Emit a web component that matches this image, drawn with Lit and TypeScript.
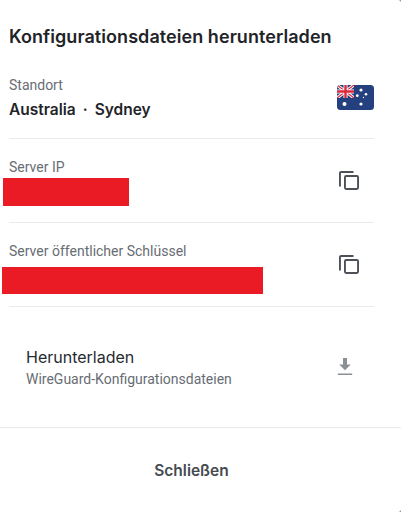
import { LitElement, html, css, svg } from "lit";
import { customElement } from "lit/decorators.js";

const copyIcon = html`<svg class="icon" width="20" height="19" viewBox="0 0 20 19" fill="none" stroke="#4b5157" stroke-width="1.9"><rect x="5.95" y="4.95" width="13.1" height="13.1" rx="1.2"/><path d="M14.5 .95H2.1A1.15 1.15 0 0 0 .95 2.1V15.5"/></svg>`;

const flag = html`<svg class="flag" width="37" height="25" viewBox="0 0 37 25">
  <defs><clipPath id="c"><rect width="37" height="25" rx="3.5"/></clipPath><clipPath id="q"><rect width="17" height="13"/></clipPath></defs>
  <g clip-path="url(#c)">
    <rect width="37" height="25" fill="#24407f"/>
    <g clip-path="url(#q)">
      <rect width="17" height="13" fill="#2a3f80"/>
      <path d="M0 0L17 13M17 0L0 13" stroke="#fff" stroke-width="3"/>
      <path d="M0 0L17 13M17 0L0 13" stroke="#d8283c" stroke-width="1.2"/>
      <path d="M8.5 0V13M0 6.5H17" stroke="#fff" stroke-width="4"/>
      <path d="M8.5 0V13M0 6.5H17" stroke="#d8283c" stroke-width="2.4"/>
    </g>
    ${svg`<g fill="#fff"><circle cx="7.5" cy="19" r="2"/><circle cx="24" cy="19" r="1.6"/><circle cx="24" cy="5" r="1.6"/><circle cx="20.3" cy="10.7" r="1.4"/><circle cx="29" cy="9.3" r="1.3"/><circle cx="26.5" cy="12.5" r=".7"/></g>`}
  </g>
</svg>`;

const downloadIcon = html`<svg class="icon" width="16" height="18" viewBox="0 0 16 18"><path fill="#8b9096" d="M6 0h4v6.5h3.8L8 12.2 2.2 6.5H6zM.8 15.4h14.4v1.6H.8z"/></svg>`;

@customElement("app-root")
export class AppRoot extends LitElement {
  static styles = css`
    :host {
      display: block;
      width: 401px;
      height: 512px;
      background: #8a8a8a;
      font-family: Inter, "Liberation Sans", sans-serif;
      color: #1f2429;
      overflow: hidden;
    }
    .page {
      display: flex;
      flex-direction: column;
      height: 512px;
      background: #fff;
      border-radius: 0 3px 3px 0;
    }
    h1 {
      margin: 0;
      padding: 26px 9px 0;
      height: 51px;
      box-sizing: border-box;
      font-size: 18px;
      line-height: 22px;
      font-weight: 600;
      letter-spacing: 0.06px;
      color: #1f2429;
    }
    .rows { margin: 0 27px 0 9px; }
    .row {
      display: flex;
      justify-content: space-between;
      align-items: flex-start;
      height: 84px;
      padding-top: 19px;
      box-sizing: border-box;
      border-bottom: 1px solid #e9eaeb;
    }
    .first { height: 88px; padding-top: 25px; }
    .label { font-family: Roboto, sans-serif; font-size: 14px; line-height: 18px; color: #686d73; }
    .value { font-size: 15.5px; line-height: 22px; font-weight: 600; margin-top: 5px; }
    .dot { margin: 0 7px; }
    .redact { background: #ea1b25; height: 28px; }
    .ip { width: 126px; margin: 2px 0 0 -6px; }
    .key { width: 261px; margin: 7px 0 0 -7px; height: 27px; }
    .flag { margin-top: 9px; display: block; }
    .action { margin: 13px 15px 0 0; }
    .download {
      display: flex;
      justify-content: space-between;
      align-items: center;
      height: 121px;
      padding: 0 48px 0 26px;
      border-bottom: 1px solid #e9eaeb;
      box-sizing: border-box;
      flex: none;
    }
    .dl-title { font-size: 16px; line-height: 22px; color: #262b30; }
    .dl-sub { font-family: Roboto, sans-serif; font-size: 14px; line-height: 20px; color: #686d73; margin-top: 1px; }
    .close {
      flex: 1;
      display: flex;
      align-items: center;
      justify-content: center;
      font-size: 15.5px;
      font-weight: 600;
      color: #454a50;
      padding-right: 18px;
    }
    .icon { display: block; }
  `;

  render() {
    return html`<div class="page">
      <h1>Konfigurationsdateien herunterladen</h1>
      <div class="rows">
        <div class="row first">
          <div><div class="label">Standort</div><div class="value">Australia<span class="dot">·</span>Sydney</div></div>
          ${flag}
        </div>
        <div class="row">
          <div><div class="label">Server IP</div><div class="redact ip"></div></div>
          <div class="action">${copyIcon}</div>
        </div>
        <div class="row">
          <div><div class="label">Server öffentlicher Schlüssel</div><div class="redact key"></div></div>
          <div class="action">${copyIcon}</div>
        </div>
      </div>
      <div class="download">
        <div><div class="dl-title">Herunterladen</div><div class="dl-sub">WireGuard-Konfigurationsdateien</div></div>
        ${downloadIcon}
      </div>
      <div class="close">Schließen</div>
    </div>`;
  }
}
